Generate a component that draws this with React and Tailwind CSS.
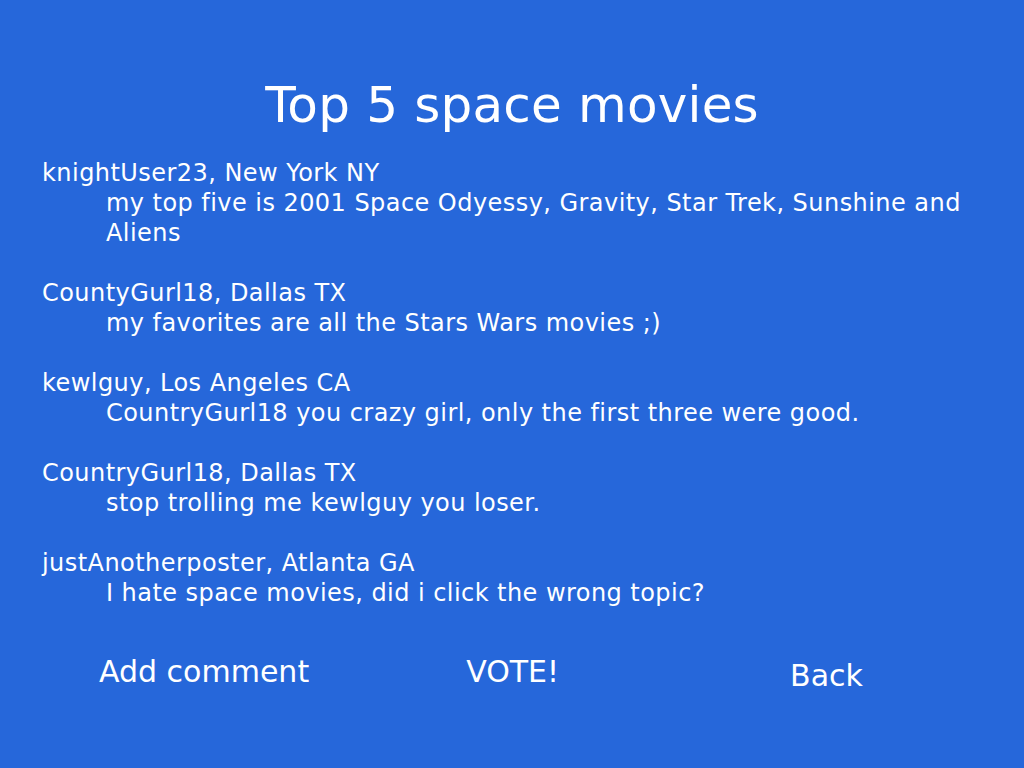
import React from "react";

const posts = [
  {
    user: "knightUser23, New York NY",
    text: "my top five is 2001 Space Odyessy, Gravity, Star Trek, Sunshine and Aliens",
  },
  { user: "CountyGurl18, Dallas TX", text: "my favorites are all the Stars Wars movies ;)" },
  {
    user: "kewlguy, Los Angeles CA",
    text: "CountryGurl18 you crazy girl, only the first three were good.",
  },
  { user: "CountryGurl18, Dallas TX", text: "stop trolling me kewlguy you loser." },
  {
    user: "justAnotherposter, Atlanta GA",
    text: "I hate space movies, did i click the wrong topic?",
  },
];

export default function App() {
  return (
    <div
      className="w-[1024px] h-[768px] bg-[#2667da] text-white overflow-hidden"
      style={{ fontFamily: '"DejaVu Sans", sans-serif' }}
    >
      <h1 className="text-[50px] leading-[60px] text-center pt-[75px] tracking-[0.2px]">
        Top 5 space movies
      </h1>

      <div className="px-[42px] mt-[23px] text-[24px] leading-[30px] tracking-[0.45px]">
        {posts.map((p, i) => (
          <div key={i} className={i > 0 ? "mt-[30px]" : ""}>
            <p>{p.user}</p>
            <p className="pl-[64px]">{p.text}</p>
          </div>
        ))}
      </div>

      <div className="flex items-start mt-[46px] text-[30px] leading-[36px]">
        <button className="ml-[99px]">Add comment</button>
        <button className="ml-[157px]">VOTE!</button>
        <button className="ml-[231px] mt-[4px]">Back</button>
      </div>
    </div>
  );
}
